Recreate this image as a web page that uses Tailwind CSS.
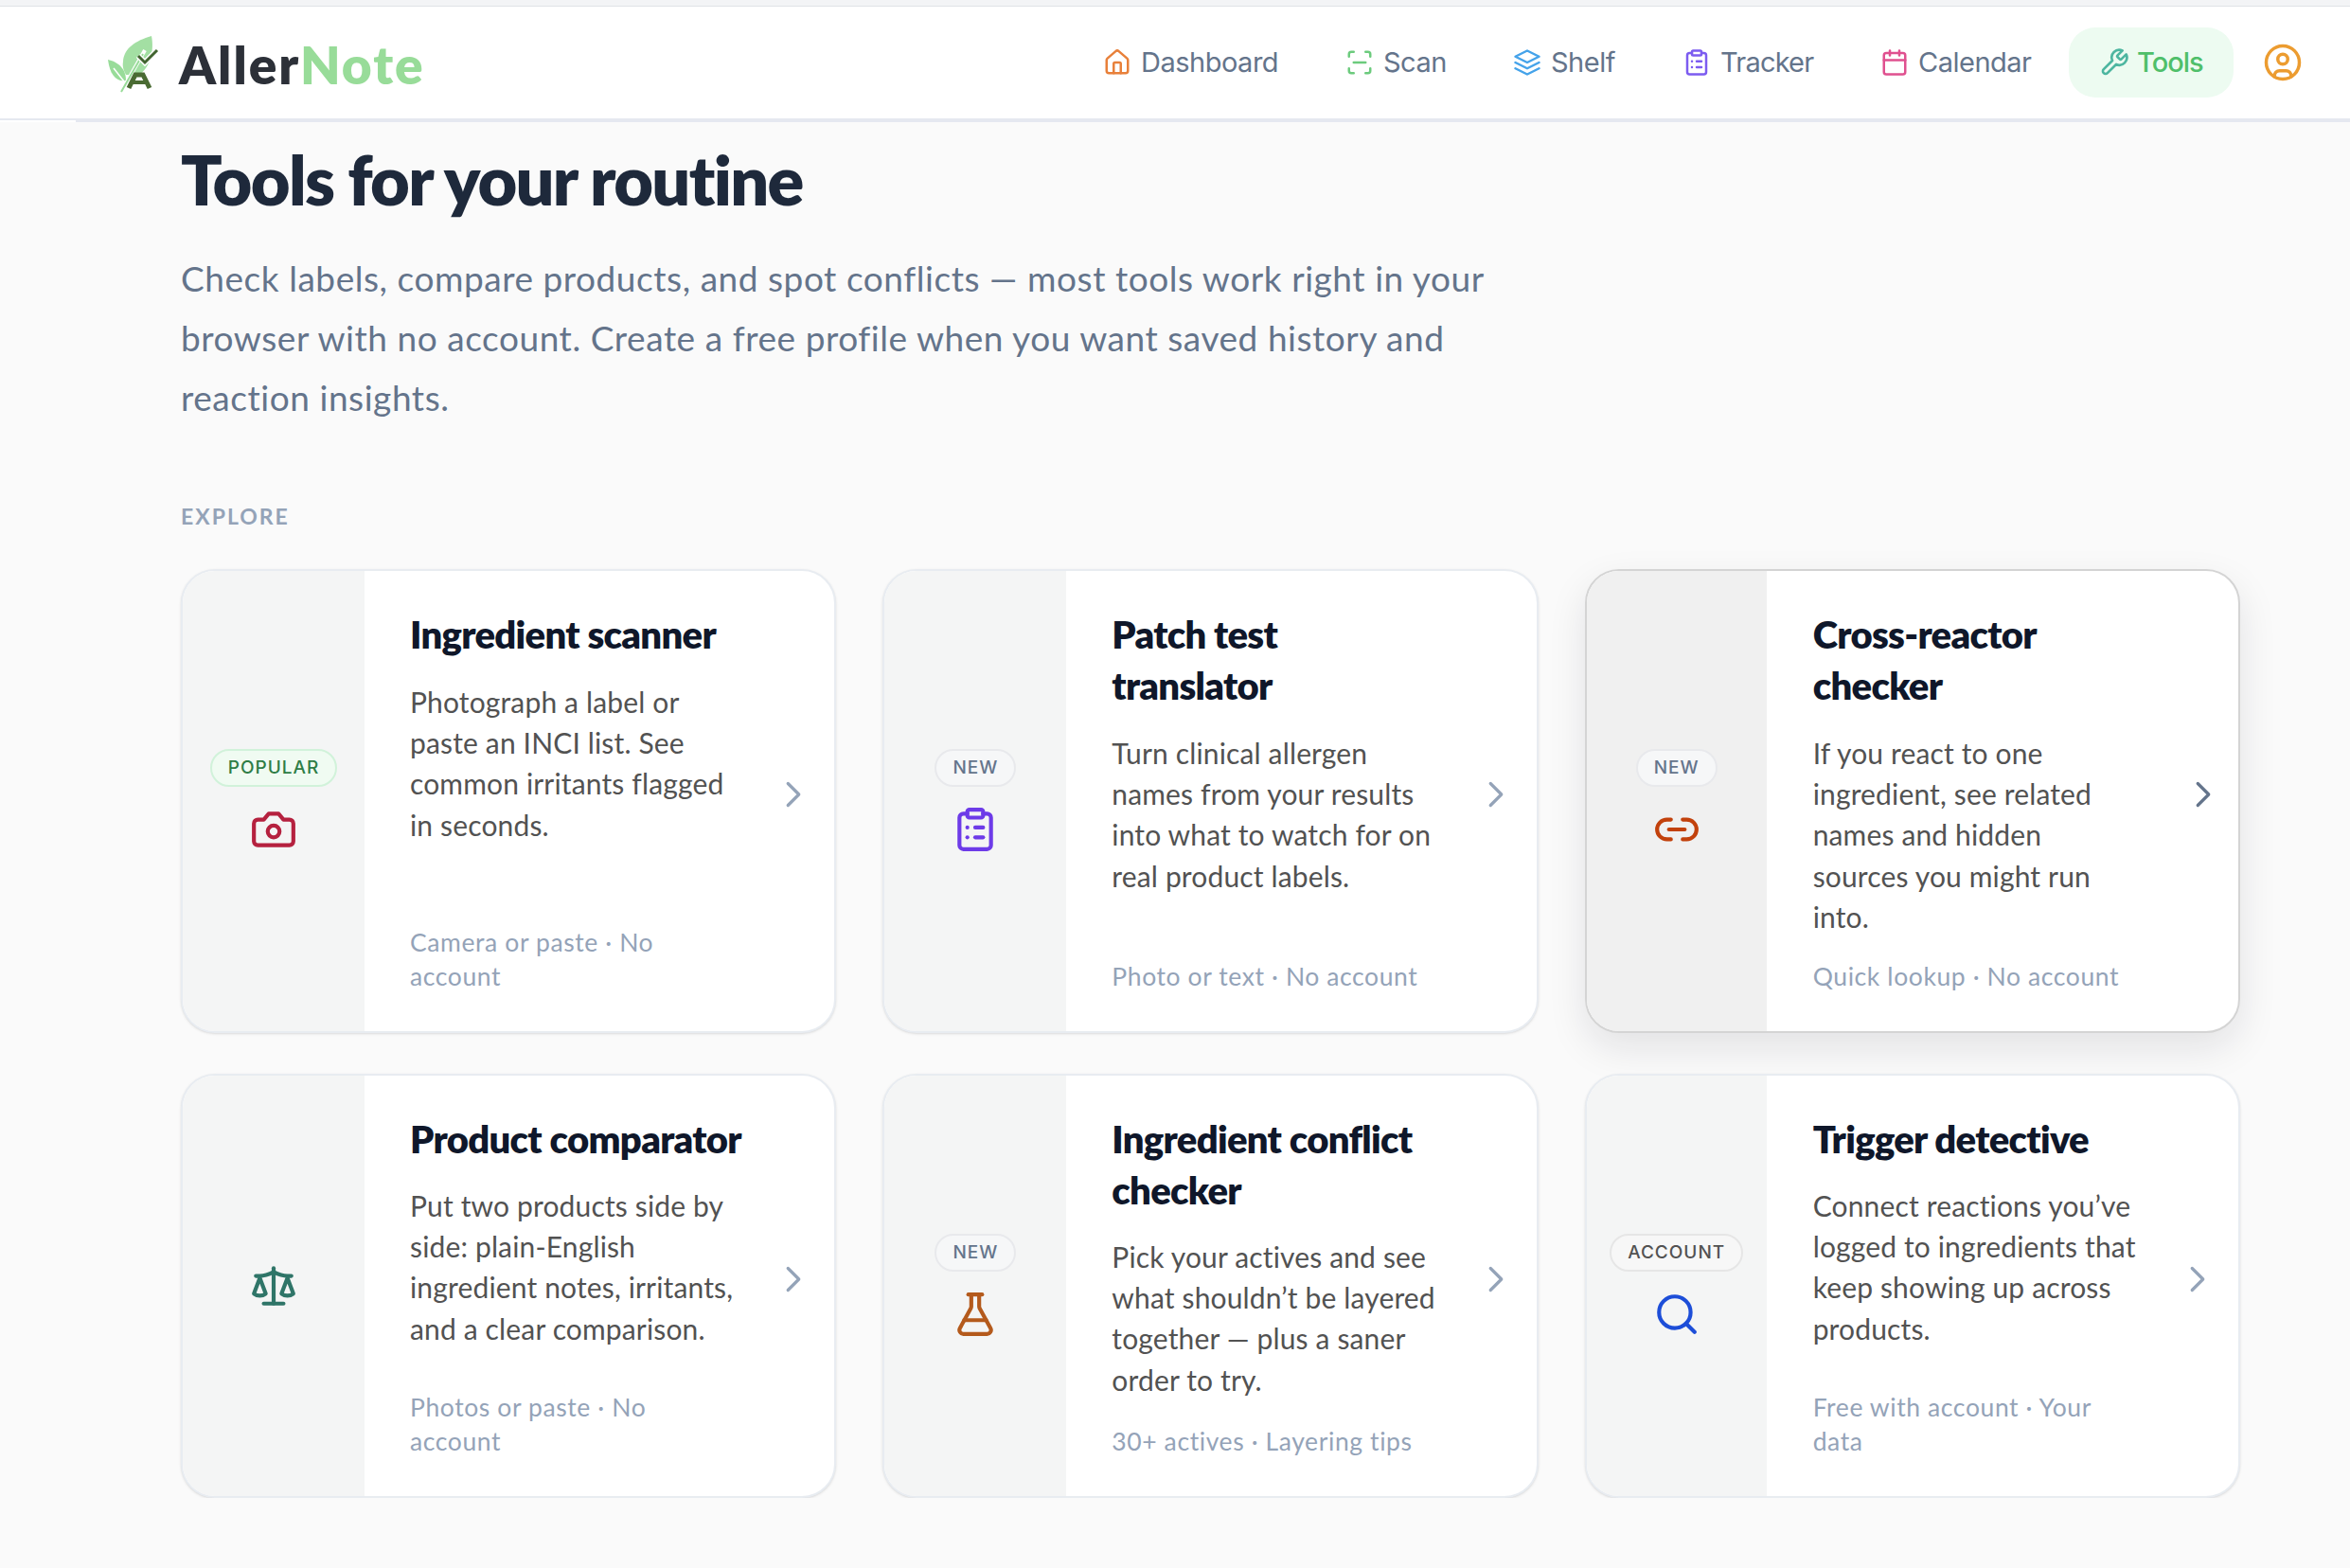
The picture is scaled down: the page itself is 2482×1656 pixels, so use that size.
<!DOCTYPE html>
<html lang="en">
<head>
  <meta charset="UTF-8">
  <title>AllerNote - Tools</title>
  <script src="https://cdn.jsdelivr.net/npm/@tailwindcss/browser@4"></script>
</head>
<body class="bg-[#fafafa] font-['Lato',sans-serif]">

  <!-- Top strip -->
  <div class="h-[7px] bg-[#f3f4f6] border-b border-[#e0e2e6]"></div>

  <!-- Header -->
  <header class="relative h-[122px] bg-white border-b-4 border-[#e5e8f0] flex items-center justify-between pl-[113px] pr-[50px]">
    <div class="absolute left-0 bottom-[-4px] w-[80px] h-[2px] bg-white"></div>
    <div class="flex items-center gap-[17px] mt-[4px]">
      <svg width="60" height="62" viewBox="0 0 60 62" fill="none">
        <path d="M47 1C30 6 18 14 17 28c-1 6 1 10 3 14h14C46 34 50 16 47 1Z" fill="#a3dfa3"/>
        <path d="M1 26c9 2 19 8 19 22C10 50 3 42 1 26Z" fill="#98dc99"/>
        <path d="M15 60 40 16" stroke="#fff" stroke-width="4"/>
        <path d="M15 60 38 20" stroke="#98dc99" stroke-width="2"/>
        <path d="M7 35l11 14" stroke="#fff" stroke-width="1.5"/>
        <path d="M23 56l7-14h8l7 14" stroke="#4a6b33" stroke-width="5"/>
        <path d="M27 50h14" stroke="#4a6b33" stroke-width="4"/>
        <path d="M33 22l7 7 13-13" stroke="#fff" stroke-width="6"/>
        <path d="M33 22l7 7 13-13" stroke="#41642f" stroke-width="3"/>
      </svg>
      <div class="font-extrabold text-[55px] leading-none tracking-[2px] text-[#2c3038] -ml-[1px]">Aller<span class="text-[#98dc99]">Note</span></div>
    </div>

    <nav class="flex items-center gap-[8px] text-[29px] text-[#64748b] font-['Inter',sans-serif]">
      <a class="flex items-center gap-[10px] px-[32px] h-[74px]">
        <svg class="w-[30px] h-[30px] text-[#e8803a]" viewBox="0 0 24 24" fill="none" stroke="currentColor" stroke-width="2" stroke-linecap="round" stroke-linejoin="round"><path d="M15 21v-8a1 1 0 0 0-1-1h-4a1 1 0 0 0-1 1v8"/><path d="M3 10a2 2 0 0 1 .709-1.528l7-5.999a2 2 0 0 1 2.582 0l7 5.999A2 2 0 0 1 21 10v9a2 2 0 0 1-2 2H5a2 2 0 0 1-2-2z"/></svg>
        <span class="w-[144px] whitespace-nowrap tracking-[-0.5px]">Dashboard</span>
      </a>
      <a class="flex items-center gap-[10px] px-[32px] h-[74px]">
        <svg class="w-[30px] h-[30px] text-[#6ccb7d]" viewBox="0 0 24 24" fill="none" stroke="currentColor" stroke-width="2" stroke-linecap="round" stroke-linejoin="round"><path d="M3 7V5a2 2 0 0 1 2-2h2"/><path d="M17 3h2a2 2 0 0 1 2 2v2"/><path d="M21 17v2a2 2 0 0 1-2 2h-2"/><path d="M7 21H5a2 2 0 0 1-2-2v-2"/><path d="M7 12h10"/></svg>
        <span class="w-[65px] whitespace-nowrap tracking-[-0.5px]">Scan</span>
      </a>
      <a class="flex items-center gap-[10px] px-[32px] h-[74px]">
        <svg class="w-[30px] h-[30px] text-[#45a3ea]" viewBox="0 0 24 24" fill="none" stroke="currentColor" stroke-width="2" stroke-linecap="round" stroke-linejoin="round"><path d="M12 2 2 7l10 5 10-5-10-5z"/><path d="M2 17l10 5 10-5"/><path d="M2 12l10 5 10-5"/></svg>
        <span class="w-[67px] whitespace-nowrap tracking-[-0.5px]">Shelf</span>
      </a>
      <a class="flex items-center gap-[10px] px-[32px] h-[74px]">
        <svg class="w-[30px] h-[30px] text-[#7c5cf0]" viewBox="0 0 24 24" fill="none" stroke="currentColor" stroke-width="2" stroke-linecap="round" stroke-linejoin="round"><rect x="8" y="2" width="8" height="4" rx="1"/><path d="M16 4h2a2 2 0 0 1 2 2v14a2 2 0 0 1-2 2H6a2 2 0 0 1-2-2V6a2 2 0 0 1 2-2h2"/><path d="M12 11h4"/><path d="M12 16h4"/><path d="M8 11h.01"/><path d="M8 16h.01"/></svg>
        <span class="w-[97px] whitespace-nowrap tracking-[-0.8px]">Tracker</span>
      </a>
      <a class="flex items-center gap-[10px] px-[32px] h-[74px]">
        <svg class="w-[30px] h-[30px] text-[#e0508f]" viewBox="0 0 24 24" fill="none" stroke="currentColor" stroke-width="2" stroke-linecap="round" stroke-linejoin="round"><path d="M8 2v4"/><path d="M16 2v4"/><rect x="3" y="4" width="18" height="18" rx="2"/><path d="M3 10h18"/></svg>
        <span class="w-[119px] whitespace-nowrap tracking-[-0.5px]">Calendar</span>
      </a>
      <a class="flex items-center gap-[8px] px-[32px] h-[74px] rounded-[28px] bg-[#edfbf1] text-[#4fbf6a] font-medium">
        <svg class="w-[32px] h-[32px] text-[#4db6a0]" viewBox="0 0 24 24" fill="none" stroke="currentColor" stroke-width="2" stroke-linecap="round" stroke-linejoin="round"><path d="M14.7 6.3a1 1 0 0 0 0 1.4l1.6 1.6a1 1 0 0 0 1.4 0l3.77-3.77a6 6 0 0 1-7.94 7.94l-6.91 6.91a2.12 2.12 0 0 1-3-3l6.91-6.91a6 6 0 0 1 7.94-7.94l-3.76 3.76z"/></svg>
        <span class="w-[70px] whitespace-nowrap tracking-[-1px]">Tools</span>
      </a>
      <svg class="w-[42px] h-[42px] ml-[23px] text-[#ec9c30]" viewBox="0 0 24 24" fill="none" stroke="currentColor" stroke-width="2" stroke-linecap="round" stroke-linejoin="round"><circle cx="12" cy="12" r="10"/><circle cx="12" cy="10" r="3"/><path d="M7 20.5V20a3 3 0 0 1 3-3h4a3 3 0 0 1 3 3v.5"/></svg>
    </nav>
  </header>

  <main class="pl-[191px] pr-[116px]">
    <h1 class="mt-[17px] text-[72px] leading-[86px] font-extrabold tracking-[-1.7px] text-[#1e293b]">Tools for your routine</h1>
    <p class="mt-[30px] text-[37px] leading-[63px] text-[#64748b] tracking-[0.55px]">
      Check labels, compare products, and spot conflicts — most tools work right in your<br>
      browser with no account. Create a free profile when you want saved history and<br>
      reaction insights.
    </p>
    <div class="mt-[78px] text-[23px] leading-[32px] font-bold tracking-[2px] text-[#94a3b8]">EXPLORE</div>

    <!-- Tool cards -->
    <div class="mt-[40px] grid grid-cols-3 grid-rows-[490px_448px] gap-x-[49px] gap-y-[43px]">

      <article class="flex rounded-[36px] border-2 border-[#e8ecf1] bg-white overflow-hidden shadow-sm">
        <div class="w-[192px] shrink-0 bg-[#f4f5f5] flex flex-col items-center justify-center gap-[20px]">
          <span class="h-[40px] px-[17px] flex items-center rounded-full border-2 border-[#d1f2da] bg-[#f0fbf2] text-[#2e7d46] text-[19px] tracking-[1px] font-medium font-['Inter',sans-serif]">POPULAR</span>
          <svg class="w-[50px] h-[50px] text-[#b5213f]" viewBox="0 0 24 24" fill="none" stroke="currentColor" stroke-width="2" stroke-linecap="round" stroke-linejoin="round"><path d="M14.5 4h-5L7 7H4a2 2 0 0 0-2 2v9a2 2 0 0 0 2 2h16a2 2 0 0 0 2-2V9a2 2 0 0 0-2-2h-3l-2.5-3z"/><circle cx="12" cy="13" r="3"/></svg>
        </div>
        <div class="flex-1 flex flex-col pl-[48px] pt-[40px] pb-[40px]">
          <h2 class="text-[40px] leading-[54px] font-extrabold tracking-[-0.7px] text-[#0f172a]">Ingredient scanner</h2>
          <p class="mt-[23px] text-[30px] leading-[43.2px] text-[#525252] tracking-[0.15px]">Photograph a label or<br>paste an INCI list. See<br>common irritants flagged<br>in seconds.</p>
          <p class="mt-auto text-[26.5px] leading-[36px] text-[#94a3b8] tracking-[0.6px]">Camera or paste · No<br>account</p>
        </div>
        <svg class="w-[46px] h-[46px] self-center shrink-0 mr-[20px] mb-[14px] text-[#94a3b8]" viewBox="0 0 24 24" fill="none" stroke="currentColor" stroke-width="1.7" stroke-linecap="round" stroke-linejoin="round"><path d="m9 18 6-6-6-6"/></svg>
      </article>

      <article class="flex rounded-[36px] border-2 border-[#e8ecf1] bg-white overflow-hidden shadow-sm">
        <div class="w-[192px] shrink-0 bg-[#f4f5f5] flex flex-col items-center justify-center gap-[20px]">
          <span class="h-[40px] px-[17px] flex items-center rounded-full border-2 border-[#e8e9ec] bg-[#f6f7f8] text-[#64748b] text-[19px] tracking-[1px] font-medium font-['Inter',sans-serif]">NEW</span>
          <svg class="w-[50px] h-[50px] text-[#6d3be8]" viewBox="0 0 24 24" fill="none" stroke="currentColor" stroke-width="2" stroke-linecap="round" stroke-linejoin="round"><rect x="8" y="2" width="8" height="4" rx="1"/><path d="M16 4h2a2 2 0 0 1 2 2v14a2 2 0 0 1-2 2H6a2 2 0 0 1-2-2V6a2 2 0 0 1 2-2h2"/><path d="M12 11h4"/><path d="M12 16h4"/><path d="M8 11h.01"/><path d="M8 16h.01"/></svg>
        </div>
        <div class="flex-1 flex flex-col pl-[48px] pt-[40px] pb-[40px]">
          <h2 class="text-[40px] leading-[54px] font-extrabold tracking-[-0.7px] text-[#0f172a]">Patch test<br>translator</h2>
          <p class="mt-[23px] text-[30px] leading-[43.2px] text-[#525252] tracking-[0.15px]">Turn clinical allergen<br>names from your results<br>into what to watch for on<br>real product labels.</p>
          <p class="mt-auto text-[26.5px] leading-[36px] text-[#94a3b8] tracking-[0.6px]">Photo or text · No account</p>
        </div>
        <svg class="w-[46px] h-[46px] self-center shrink-0 mr-[20px] mb-[14px] text-[#94a3b8]" viewBox="0 0 24 24" fill="none" stroke="currentColor" stroke-width="1.7" stroke-linecap="round" stroke-linejoin="round"><path d="m9 18 6-6-6-6"/></svg>
      </article>

      <article class="flex rounded-[36px] border-2 border-[#d4d4d4] bg-white overflow-hidden shadow-[0_16px_40px_rgba(15,23,42,0.10)]">
        <div class="w-[190px] shrink-0 bg-[#f0f0f0] flex flex-col items-center justify-center gap-[20px]">
          <span class="h-[40px] px-[17px] flex items-center rounded-full border-2 border-[#e8e9ec] bg-[#f6f7f8] text-[#64748b] text-[19px] tracking-[1px] font-medium font-['Inter',sans-serif]">NEW</span>
          <svg class="w-[50px] h-[50px] text-[#c2410c]" viewBox="0 0 24 24" fill="none" stroke="currentColor" stroke-width="2" stroke-linecap="round" stroke-linejoin="round"><path d="M9 17H7A5 5 0 0 1 7 7h2"/><path d="M15 7h2a5 5 0 1 1 0 10h-2"/><path d="M8 12h8"/></svg>
        </div>
        <div class="flex-1 flex flex-col pl-[49px] pt-[40px] pb-[40px]">
          <h2 class="text-[40px] leading-[54px] font-extrabold tracking-[-0.7px] text-[#0f172a]">Cross-reactor<br>checker</h2>
          <p class="mt-[23px] text-[30px] leading-[43.2px] text-[#525252] tracking-[0.15px]">If you react to one<br>ingredient, see related<br>names and hidden<br>sources you might run<br>into.</p>
          <p class="mt-auto text-[26.5px] leading-[36px] text-[#94a3b8] tracking-[0.6px]">Quick lookup · No account</p>
        </div>
        <svg class="w-[46px] h-[46px] self-center shrink-0 mr-[14px] mb-[14px] text-[#64748b]" viewBox="0 0 24 24" fill="none" stroke="currentColor" stroke-width="1.7" stroke-linecap="round" stroke-linejoin="round"><path d="m9 18 6-6-6-6"/></svg>
      </article>

      <article class="flex rounded-[36px] border-2 border-[#e8ecf1] bg-white overflow-hidden shadow-sm">
        <div class="w-[192px] shrink-0 bg-[#f4f5f5] flex flex-col items-center justify-center gap-[20px]">
          <svg class="w-[50px] h-[50px] text-[#2f7568]" viewBox="0 0 24 24" fill="none" stroke="currentColor" stroke-width="2" stroke-linecap="round" stroke-linejoin="round"><path d="m16 16 3-8 3 8c-.87.65-1.92 1-3 1s-2.13-.35-3-1Z"/><path d="m2 16 3-8 3 8c-.87.65-1.92 1-3 1s-2.13-.35-3-1Z"/><path d="M7 21h10"/><path d="M12 3v18"/><path d="M3 7h2c2 0 5-1 7-2 2 1 5 2 7 2h2"/></svg>
        </div>
        <div class="flex-1 flex flex-col pl-[48px] pt-[40px] pb-[40px]">
          <h2 class="text-[40px] leading-[54px] font-extrabold tracking-[-0.7px] text-[#0f172a] whitespace-nowrap">Product comparator</h2>
          <p class="mt-[22px] text-[30px] leading-[43.2px] text-[#525252] tracking-[0.15px]">Put two products side by<br>side: plain-English<br>ingredient notes, irritants,<br>and a clear comparison.</p>
          <p class="mt-auto text-[26.5px] leading-[36px] text-[#94a3b8] tracking-[0.6px]">Photos or paste · No<br>account</p>
        </div>
        <svg class="w-[46px] h-[46px] self-center shrink-0 mr-[20px] mb-[14px] text-[#94a3b8]" viewBox="0 0 24 24" fill="none" stroke="currentColor" stroke-width="1.7" stroke-linecap="round" stroke-linejoin="round"><path d="m9 18 6-6-6-6"/></svg>
      </article>

      <article class="flex rounded-[36px] border-2 border-[#e8ecf1] bg-white overflow-hidden shadow-sm">
        <div class="w-[192px] shrink-0 bg-[#f4f5f5] flex flex-col items-center justify-center gap-[20px]">
          <span class="h-[40px] px-[17px] flex items-center rounded-full border-2 border-[#e8e9ec] bg-[#f6f7f8] text-[#64748b] text-[19px] tracking-[1px] font-medium font-['Inter',sans-serif]">NEW</span>
          <svg class="w-[50px] h-[50px] text-[#b45a1c]" viewBox="0 0 24 24" fill="none" stroke="currentColor" stroke-width="2" stroke-linecap="round" stroke-linejoin="round"><path d="M14 2v6a2 2 0 0 0 .245.96l5.51 10.08A2 2 0 0 1 18 22H6a2 2 0 0 1-1.755-2.96l5.51-10.08A2 2 0 0 0 10 8V2"/><path d="M6.453 15h11.094"/><path d="M8.5 2h7"/></svg>
        </div>
        <div class="flex-1 flex flex-col pl-[48px] pt-[40px] pb-[40px]">
          <h2 class="text-[40px] leading-[54px] font-extrabold tracking-[-0.7px] text-[#0f172a]">Ingredient conflict<br>checker</h2>
          <p class="mt-[22px] text-[30px] leading-[43.2px] text-[#525252] tracking-[0.15px]">Pick your actives and see<br>what shouldn’t be layered<br>together — plus a saner<br>order to try.</p>
          <p class="mt-auto text-[26.5px] leading-[36px] text-[#94a3b8] tracking-[0.6px]">30+ actives · Layering tips</p>
        </div>
        <svg class="w-[46px] h-[46px] self-center shrink-0 mr-[20px] mb-[14px] text-[#94a3b8]" viewBox="0 0 24 24" fill="none" stroke="currentColor" stroke-width="1.7" stroke-linecap="round" stroke-linejoin="round"><path d="m9 18 6-6-6-6"/></svg>
      </article>

      <article class="flex rounded-[36px] border-2 border-[#e8ecf1] bg-white overflow-hidden shadow-sm">
        <div class="w-[190px] shrink-0 bg-[#f4f5f5] flex flex-col items-center justify-center gap-[20px]">
          <span class="h-[40px] px-[17px] flex items-center rounded-full border-2 border-[#e6e6e6] bg-[#f7f7f7] text-[#525252] text-[19px] tracking-[1px] font-medium font-['Inter',sans-serif]">ACCOUNT</span>
          <svg class="w-[50px] h-[50px] text-[#1d4ed8]" viewBox="0 0 24 24" fill="none" stroke="currentColor" stroke-width="2" stroke-linecap="round" stroke-linejoin="round"><path d="m21 21-4.34-4.34"/><circle cx="11" cy="11" r="8"/></svg>
        </div>
        <div class="flex-1 flex flex-col pl-[49px] pt-[40px] pb-[40px]">
          <h2 class="text-[40px] leading-[54px] font-extrabold tracking-[-0.7px] text-[#0f172a]">Trigger detective</h2>
          <p class="mt-[22px] text-[30px] leading-[43.2px] text-[#525252] tracking-[0.15px]">Connect reactions you’ve<br>logged to ingredients that<br>keep showing up across<br>products.</p>
          <p class="mt-auto text-[26.5px] leading-[36px] text-[#94a3b8] tracking-[0.6px]">Free with account · Your<br>data</p>
        </div>
        <svg class="w-[46px] h-[46px] self-center shrink-0 mr-[20px] mb-[14px] text-[#94a3b8]" viewBox="0 0 24 24" fill="none" stroke="currentColor" stroke-width="1.7" stroke-linecap="round" stroke-linejoin="round"><path d="m9 18 6-6-6-6"/></svg>
      </article>

    </div>
  </main>
</body>
</html>
